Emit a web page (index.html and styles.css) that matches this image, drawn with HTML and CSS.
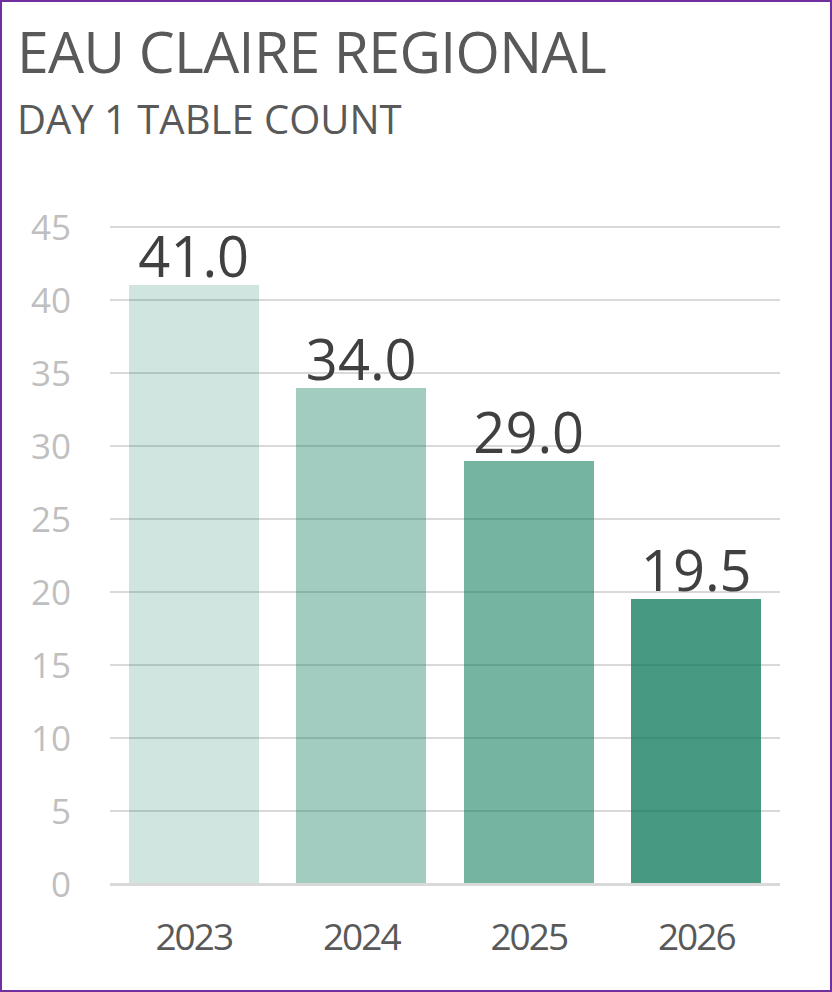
FILE: index.html
```html
<!DOCTYPE html>
<html lang="en">
<head>
<meta charset="utf-8">
<title>Eau Claire Regional</title>
<link rel="stylesheet" href="styles.css">
</head>
<body>
<div class="card">
  <header class="head">
    <h1 class="title">EAU CLAIRE REGIONAL</h1>
    <h2 class="subtitle">DAY 1 TABLE COUNT</h2>
  </header>
  <div class="chart">
    <div class="yaxis">
      <div class="tick">45</div>
      <div class="tick">40</div>
      <div class="tick">35</div>
      <div class="tick">30</div>
      <div class="tick">25</div>
      <div class="tick">20</div>
      <div class="tick">15</div>
      <div class="tick">10</div>
      <div class="tick">5</div>
      <div class="tick">0</div>
    </div>
    <div class="main">
      <div class="plot">
        <div class="col">
          <div class="value">41.0</div>
          <div class="bar b1" style="height:597.6px"></div>
        </div>
        <div class="col">
          <div class="value">34.0</div>
          <div class="bar b2" style="height:495.4px"></div>
        </div>
        <div class="col">
          <div class="value">29.0</div>
          <div class="bar b3" style="height:422.4px"></div>
        </div>
        <div class="col">
          <div class="value">19.5</div>
          <div class="bar b4" style="height:283.7px"></div>
        </div>
      </div>
      <div class="xaxis">
        <div class="xlabel">2023</div>
        <div class="xlabel">2024</div>
        <div class="xlabel">2025</div>
        <div class="xlabel">2026</div>
      </div>
    </div>
  </div>
</div>
</body>
</html>
```

FILE: styles.css
```css
html, body {
  margin: 0;
  padding: 0;
  background: #ffffff;
}

body {
  font-family: "Open Sans", "Liberation Sans", sans-serif;
}

.card {
  box-sizing: border-box;
  width: 832px;
  height: 992px;
  border: 2px solid #7030a0;
  background: #ffffff;
  overflow: hidden;
}

.head {
  padding: 21px 0 0 15px;
}

.title {
  margin: 0;
  font-size: 57px;
  line-height: 57px;
  font-weight: 400;
  color: #595959;
  letter-spacing: -0.6px;
  white-space: nowrap;
}

.subtitle {
  margin: 19px 0 0 0;
  font-size: 40px;
  line-height: 40px;
  font-weight: 400;
  color: #595959;
  letter-spacing: 0;
  white-space: nowrap;
}

.chart {
  display: flex;
  margin-top: 51px;
}

.yaxis {
  width: 108px;
  box-sizing: border-box;
  padding-right: 39px;
  display: flex;
  flex-direction: column;
}

.tick {
  height: 73px;
  line-height: 73px;
  font-size: 35px;
  color: #bfbfbf;
  text-align: right;
}

.main {
  width: 670px;
  display: flex;
  flex-direction: column;
  padding-top: 36px;
}

.plot {
  height: 657px;
  display: flex;
  border-bottom: 3px solid #d9d9d9;
  background-image: repeating-linear-gradient(
    to bottom,
    #d9d9d9 0,
    #d9d9d9 2px,
    transparent 2px,
    transparent 73px
  );
}

.col {
  flex: 1;
  display: flex;
  flex-direction: column;
  justify-content: flex-end;
  align-items: center;
}

.value {
  font-size: 56px;
  line-height: 56px;
  color: #404040;
  margin-bottom: 2px;
}

.bar {
  width: 130px;
}

.b1 { background: rgba(0, 115, 81, 0.184); }
.b2 { background: rgba(0, 115, 81, 0.36); }
.b3 { background: rgba(0, 115, 81, 0.537); }
.b4 { background: rgba(0, 115, 81, 0.72); }

.xaxis {
  display: flex;
  padding-top: 31px;
}

.xlabel {
  flex: 1;
  text-align: center;
  font-size: 37px;
  line-height: 37px;
  color: #595959;
  letter-spacing: -2px;
}
```
